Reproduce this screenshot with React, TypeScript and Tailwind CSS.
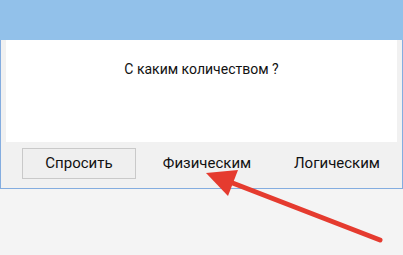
import React from "react";

export default function App() {
  const font = { fontFamily: 'Roboto, "Noto Sans", sans-serif' };
  return (
    <div className="relative w-[403px] h-[255px] bg-[#f4f4f4] overflow-hidden" style={font}>
      <div className="flex flex-col w-[403px] h-[189px] border-x border-b border-[#84ade0] bg-[#f1f1f1]">
        <div className="h-[40px] -mx-px bg-[#92c1ea]" />
        <div className="mx-[5px] h-[102px] bg-white flex justify-center pt-[18px]">
          <span className="text-[14px] leading-[22px] text-[#111]">С каким количеством ?</span>
        </div>
        <div className="flex items-start pt-[6px] pl-[21px]">
          <div className="w-[114px] h-[31px] border border-[#c9c9c9] bg-[#efefef] flex items-center justify-center text-[15px] text-[#111]">
            Спросить
          </div>
          <div className="ml-[14px] w-[114px] h-[31px] flex items-center justify-center text-[15px] text-[#111]">
            Физическим
          </div>
          <div className="ml-[16px] w-[114px] h-[31px] flex items-center justify-center text-[15px] text-[#111]">
            Логическим
          </div>
        </div>
      </div>
      <svg className="absolute left-0 top-0" width="403" height="255" viewBox="0 0 403 255">
        <line x1="380" y1="240" x2="230" y2="182" stroke="#e53b2f" strokeWidth="5" strokeLinecap="round" />
        <polygon points="206,173 238,170 228,196" fill="#e53b2f" />
      </svg>
    </div>
  );
}
